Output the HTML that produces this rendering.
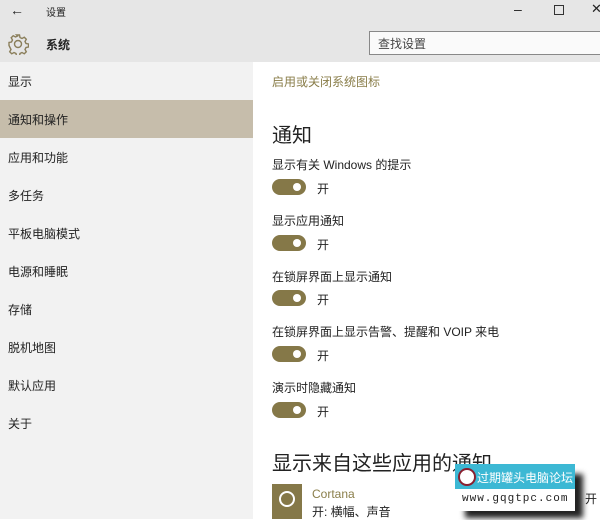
<!DOCTYPE html>
<html><head><meta charset="utf-8"><style>
body{margin:0;width:600px;height:519px;overflow:hidden;position:relative;background:#fff;font-family:"Liberation Sans","Noto Sans CJK SC",sans-serif;color:#222}
.a{position:absolute;white-space:nowrap}
#hdr{position:absolute;left:0;top:0;width:600px;height:62px;background:#e6e6e6}
#side{position:absolute;left:0;top:62px;width:253px;height:457px;background:#f2f2f2}
.si{position:absolute;left:8px;font-size:12px;color:#222}
.tg{position:absolute;left:272px;width:34px;height:16px;border-radius:8px;background:#857848}
.tg:after{content:"";position:absolute;right:5px;top:4px;width:8px;height:8px;border-radius:50%;background:#fff}
.on{position:absolute;left:317px;font-size:12px}
.lb{position:absolute;left:272px;font-size:12px}
</style></head><body>
<div id="hdr"></div>
<div class="a" style="left:10px;top:2px;font-size:14px">←</div>
<div class="a" style="left:46px;top:4px;font-size:10px">设置</div>
<div class="a" style="left:514px;top:1px;font-size:14px">–</div>
<div class="a" style="left:554px;top:5px;width:8px;height:8px;border:1px solid #333"></div>
<div class="a" style="left:591px;top:1px;font-size:13px">✕</div>
<svg class="a" style="left:7px;top:33px" width="22" height="22" viewBox="0 0 22 22"><g fill="none" stroke="#8a7e5a" stroke-width="1.4"><circle cx="11" cy="11" r="3.5"/><path d="M9.5 2h3l.5 2.5 2 1 2.3-1.3 2 2-1.3 2.3 1 2 2.5.5v3l-2.5.5-1 2 1.3 2.3-2 2-2.3-1.3-2 1-.5 2.5h-3l-.5-2.5-2-1-2.3 1.3-2-2 1.3-2.3-1-2L2 12.5v-3l2.5-.5 1-2-1.3-2.3 2-2 2.3 1.3 2-1z"/></g></svg>
<div class="a" style="left:46px;top:36px;font-size:12px;font-weight:bold">系统</div>
<div class="a" style="left:369px;top:31px;width:235px;height:22px;border:1px solid #888;background:#fafafa"></div>
<div class="a" style="left:378px;top:35px;font-size:12px;color:#444">查找设置</div>
<div id="side"></div>
<div class="a" style="left:0;top:100px;width:253px;height:38px;background:#c6bdab"></div>
<div class="si" style="top:73px">显示</div>
<div class="si" style="top:111px">通知和操作</div>
<div class="si" style="top:149px">应用和功能</div>
<div class="si" style="top:187px">多任务</div>
<div class="si" style="top:225px">平板电脑模式</div>
<div class="si" style="top:263px">电源和睡眠</div>
<div class="si" style="top:301px">存储</div>
<div class="si" style="top:339px">脱机地图</div>
<div class="si" style="top:377px">默认应用</div>
<div class="si" style="top:415px">关于</div>
<div class="a" style="left:272px;top:73px;font-size:12px;color:#8a7e4a">启用或关闭系统图标</div>
<div class="a" style="left:272px;top:119px;font-size:20px">通知</div>
<div class="lb" style="top:156px">显示有关 Windows 的提示</div><div class="tg" style="top:179px"></div><div class="on" style="top:180px">开</div>
<div class="lb" style="top:212px">显示应用通知</div><div class="tg" style="top:235px"></div><div class="on" style="top:236px">开</div>
<div class="lb" style="top:268px">在锁屏界面上显示通知</div><div class="tg" style="top:290px"></div><div class="on" style="top:291px">开</div>
<div class="lb" style="top:323px">在锁屏界面上显示告警、提醒和 VOIP 来电</div><div class="tg" style="top:346px"></div><div class="on" style="top:347px">开</div>
<div class="lb" style="top:379px">演示时隐藏通知</div><div class="tg" style="top:402px"></div><div class="on" style="top:403px">开</div>
<div class="a" style="left:272px;top:447px;font-size:20px">显示来自这些应用的通知</div>
<div class="a" style="left:272px;top:484px;width:30px;height:35px;background:#857848"></div>
<div class="a" style="left:279px;top:491px;width:12px;height:12px;border:2px solid #fff;border-radius:50%"></div>
<div class="a" style="left:312px;top:487px;font-size:12px;color:#8a7e4a">Cortana</div>
<div class="a" style="left:312px;top:503px;font-size:12px">开: 横幅、声音</div>
<div class="a" style="left:585px;top:490px;font-size:12px">开</div>
<div class="a" style="left:465px;top:474px;width:118px;height:44px;background:#222;filter:blur(3px)"></div>
<div class="a" style="left:455px;top:464px;width:120px;height:25px;background:#3cb8d4"></div>
<div class="a" style="left:455px;top:489px;width:120px;height:22px;background:#fff"></div>
<div class="a" style="left:458px;top:468px;width:14px;height:14px;border-radius:50%;background:#fff;border:2px solid #8a2030"></div>
<div class="a" style="left:477px;top:469px;font-size:12px;color:#fff">过期罐头电脑论坛</div>
<div class="a" style="left:462px;top:493px;font-size:11px;font-family:'Liberation Mono',monospace;letter-spacing:1px">www.gqgtpc.com</div>
</body></html>
